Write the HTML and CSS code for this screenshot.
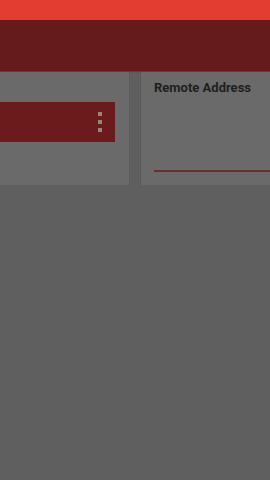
FILE: index.html
```html
<!DOCTYPE html>
<html>
<head>
<meta charset="utf-8">
<link rel="stylesheet" href="styles.css">
</head>
<body>
  <div class="status-bar"></div>
  <div class="toolbar"></div>
  <div class="cards">
    <div class="card card-left">
      <div class="red-bar">
        <div class="menu-dots"><span></span><span></span><span></span></div>
      </div>
    </div>
    <div class="card card-right">
      <div class="card-title">Remote Address</div>
      <div class="input-line"></div>
    </div>
  </div>
</body>
</html>
```
FILE: styles.css
```css
html, body {
  margin: 0;
  padding: 0;
  width: 270px;
  height: 480px;
  overflow: hidden;
  background: #5f5f5f;
  font-family: Roboto, "Liberation Sans", sans-serif;
}
.status-bar {
  height: 20px;
  background: #e33d31;
}
.toolbar {
  height: 51px;
  background: #651b1b;
  box-shadow: 0 1px 1px rgba(0,0,0,0.25);
}
.cards {
  display: flex;
  gap: 12px;
  padding-top: 1px;
  overflow: hidden;
}
.card {
  flex: none;
  height: 113px;
  background: #6a6a6a;
  box-shadow: 0 1px 1px rgba(0,0,0,0.3);
  box-sizing: border-box;
}
.card-left {
  width: 129px;
  padding-top: 30px;
}
.red-bar {
  width: 115px;
  height: 40px;
  background: #6b1b1b;
  display: flex;
  justify-content: flex-end;
  align-items: center;
}
.menu-dots {
  display: flex;
  flex-direction: column;
  gap: 4px;
  margin-right: 13px;
}
.menu-dots span {
  display: block;
  width: 4px;
  height: 4px;
  background: #978670;
}
.card-right {
  width: 160px;
  padding: 8px 0 0 13px;
  display: flex;
  flex-direction: column;
}
.card-title {
  font-size: 13px;
  font-weight: bold;
  color: #202020;
  line-height: 16px;
}
.input-line {
  margin-top: 74px;
  height: 2px;
  background: #6f2c2c;
}
```
